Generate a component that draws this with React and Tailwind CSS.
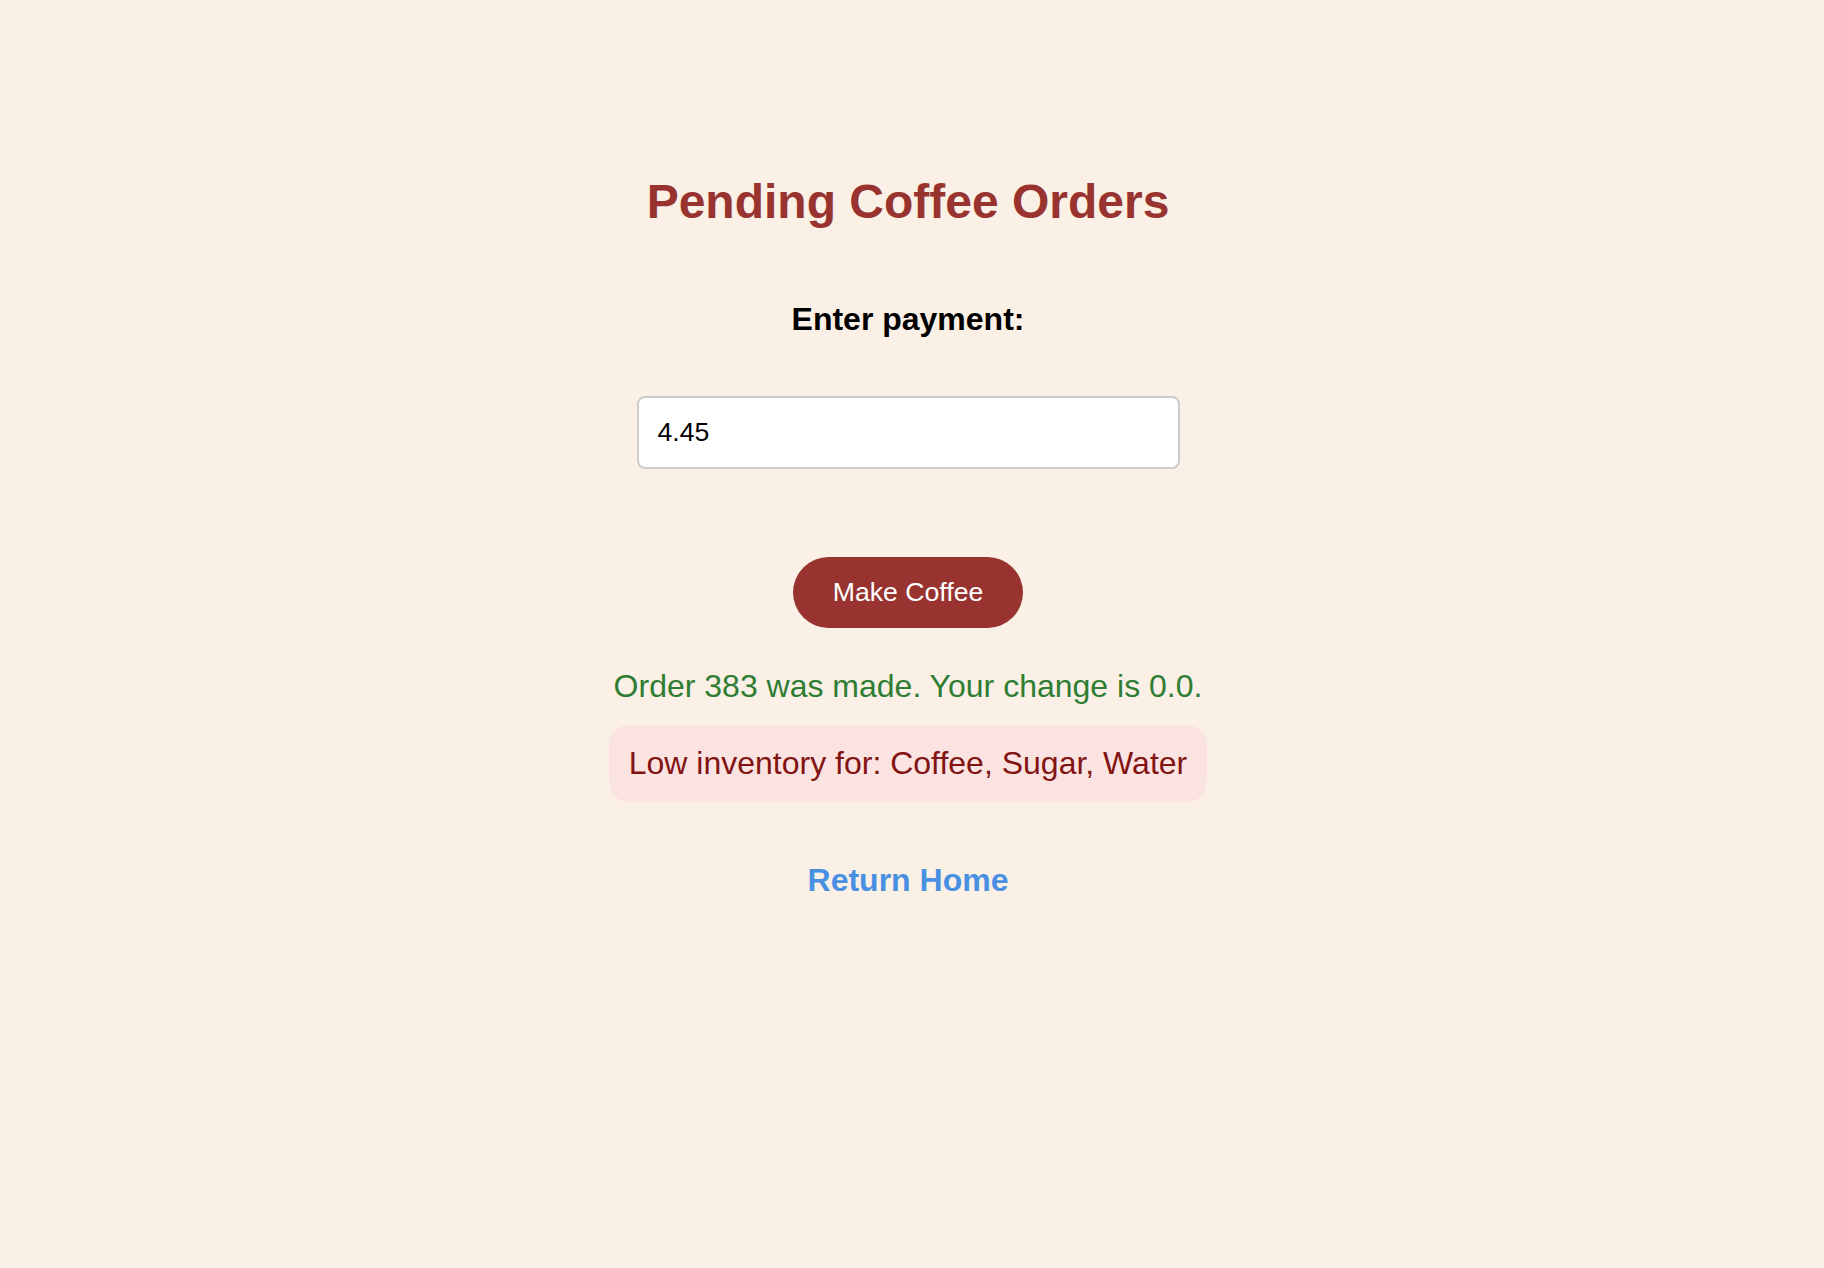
// App.jsx
export default function App() {
  return (
    <div
      className="min-h-[1268px] w-full bg-[#faf0e6] pr-2 pt-[175px]"
      style={{ fontFamily: '"Liberation Sans", Arial, Helvetica, sans-serif' }}
    >
      <div className="flex flex-col items-center">
        {/* Title */}
        <h1 className="text-[48px] leading-[54px] font-bold text-[#983330]">
          Pending Coffee Orders
        </h1>

        {/* Payment form */}
        <label
          htmlFor="payment"
          className="mt-[72px] text-[32px] leading-[36px] font-bold text-black"
        >
          Enter payment:
        </label>

        <input
          id="payment"
          type="text"
          defaultValue="4.45"
          className="mt-[59px] w-[543px] h-[73px] pl-[19px] pr-5 bg-white border-2 border-[#cccccc]
                     rounded-lg text-[26.67px] text-black outline-none"
        />

        <button
          type="button"
          className="mt-[88px] h-[71px] px-10 rounded-full bg-[#983330] text-white
                     text-[26.67px] leading-[31px]"
        >
          Make Coffee
        </button>

        {/* Status messages */}
        <p className="mt-[40px] text-[32px] leading-[36px] text-[#2e7d32]">
          Order 383 was made. Your change is 0.0.
        </p>

        <div className="mt-[21px] px-5 py-5 rounded-[20px] bg-[#fbe3e1] text-[32px] leading-[37px] text-[#821313]">
          Low inventory for: Coffee, Sugar, Water
        </div>

        <a
          href="#"
          className="mt-[60px] text-[32px] leading-[36px] font-bold text-[#4a90e2] no-underline"
        >
          Return Home
        </a>
      </div>
    </div>
  );
}
